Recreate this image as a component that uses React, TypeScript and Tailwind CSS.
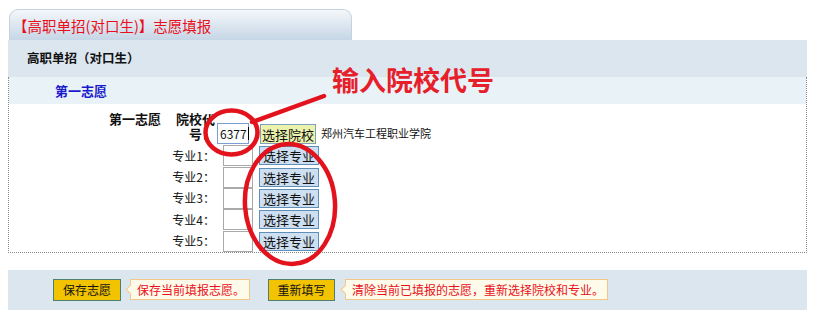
const font = { fontFamily: '"Noto Sans CJK SC", "Noto Sans", sans-serif' };

const majors = ["专业1：", "专业2：", "专业3：", "专业4：", "专业5："];

const Tip = ({ text, width }: { text: string; width: string }) => (
  <div
    className={`relative flex items-center h-[21px] ${width} pl-[6px] bg-[#fffbea] border border-[#f3c68a] text-[12px] text-[#e8101a] leading-none`}
  >
    <span className="absolute left-[-4px] top-[6px] w-[7px] h-[7px] rotate-45 bg-[#fffbea] border-l border-b border-[#f3c68a]" />
    <span className="relative">{text}</span>
  </div>
);

export default function App() {
  return (
    <div className="relative w-[815px] h-[319px] bg-white pt-[9px] pl-[8px] text-[#111]" style={font}>
      {/* tab */}
      <div className="ml-[1px] w-[343px] h-[31px] rounded-t-[9px] border border-b-0 border-[#c5d3e1] bg-linear-to-b from-[#f4f7fa] to-[#c6d6e6] pl-[3px] pt-[7px] text-[14.5px] leading-[18px] text-[#e8101a]">
        【高职单招(对口生)】志愿填报
      </div>

      {/* header */}
      <div className="w-[799px] h-[37px] bg-[#dbe6ef] flex items-center pl-[19px] font-bold text-[12.5px]">
        高职单招（对口生）
      </div>

      <div className="w-[799px] border-x border-b border-dotted border-[#8a8a8a]">
        <div className="h-[27px] bg-[#e9f3f7] flex items-center pl-[46px] pt-[1px] text-[13px] font-bold text-[#1a1acc]">
          第一志愿
        </div>

        <div className="pt-[7px]">
          <div className="flex items-start h-[34px] text-[13px]">
            <span className="w-[152px] text-right font-bold leading-[15px]">第一志愿</span>
            <span className="ml-[11px] w-[43px] text-right font-bold leading-[15px]">院校代号：</span>
            <div className="ml-[2px] mt-[12px] w-[32px] h-[21px] border border-[#7b9ed6] flex items-center pl-[2px] text-[12px] leading-none bg-white">
              6377<span className="ml-[1px] w-px h-[13px] bg-black" />
            </div>
            <button className="ml-[11px] mt-[13px] w-[56px] h-[20px] border border-[#7e9fba] bg-[#eaf2ac] text-[13px] leading-none flex items-center justify-center">
              选择院校
            </button>
            <span className="ml-[5px] mt-[15px] text-[11px] leading-[14px]">郑州汽车工程职业学院</span>
          </div>

          {majors.map((m) => (
            <div key={m} className="flex items-center h-[21.4px]">
              <span className="w-[206px] text-right text-[12px] leading-none">{m}</span>
              <div className="ml-[8px] w-[30px] h-[21px] border border-[#a9a9a9] bg-white" />
              <button className="ml-[6px] w-[60px] h-[19px] border border-[#5e8fb8] bg-[#cddff1] text-[13px] leading-none flex items-center justify-center">
                选择专业
              </button>
            </div>
          ))}
        </div>
      </div>

      {/* footer */}
      <div className="mt-[17px] w-[799px] h-[40px] bg-[#dbe6ef] flex items-center">
        <button className="ml-[45px] w-[68px] h-[22px] bg-[#f2c300] border border-[#4f7f70] text-[12px] leading-none flex items-center justify-center">
          保存志愿
        </button>
        <div className="ml-[9px]">
          <Tip text="保存当前填报志愿。" width="w-[120px]" />
        </div>
        <button className="ml-[18px] w-[67px] h-[22px] bg-[#f2c300] border border-[#4f7f70] text-[12px] leading-none flex items-center justify-center">
          重新填写
        </button>
        <div className="ml-[10px]">
          <Tip text="清除当前已填报的志愿，重新选择院校和专业。" width="w-[263px]" />
        </div>
      </div>

      {/* annotation */}
      <div className="absolute left-[332px] top-[65px] text-[27px] leading-[30px] font-bold text-[#e6202a]">
        输入院校代号
      </div>
      <svg className="absolute left-0 top-0 pointer-events-none" width="815" height="319" viewBox="0 0 815 319">
        <g fill="none" stroke="#e3131d" strokeWidth="4.5" strokeLinecap="round">
          <ellipse cx="231.5" cy="132.5" rx="26" ry="22" />
          <line x1="252" y1="122" x2="324" y2="96" />
          <ellipse cx="290" cy="204" rx="45" ry="60" transform="rotate(-4 290 204)" />
        </g>
      </svg>
    </div>
  );
}
